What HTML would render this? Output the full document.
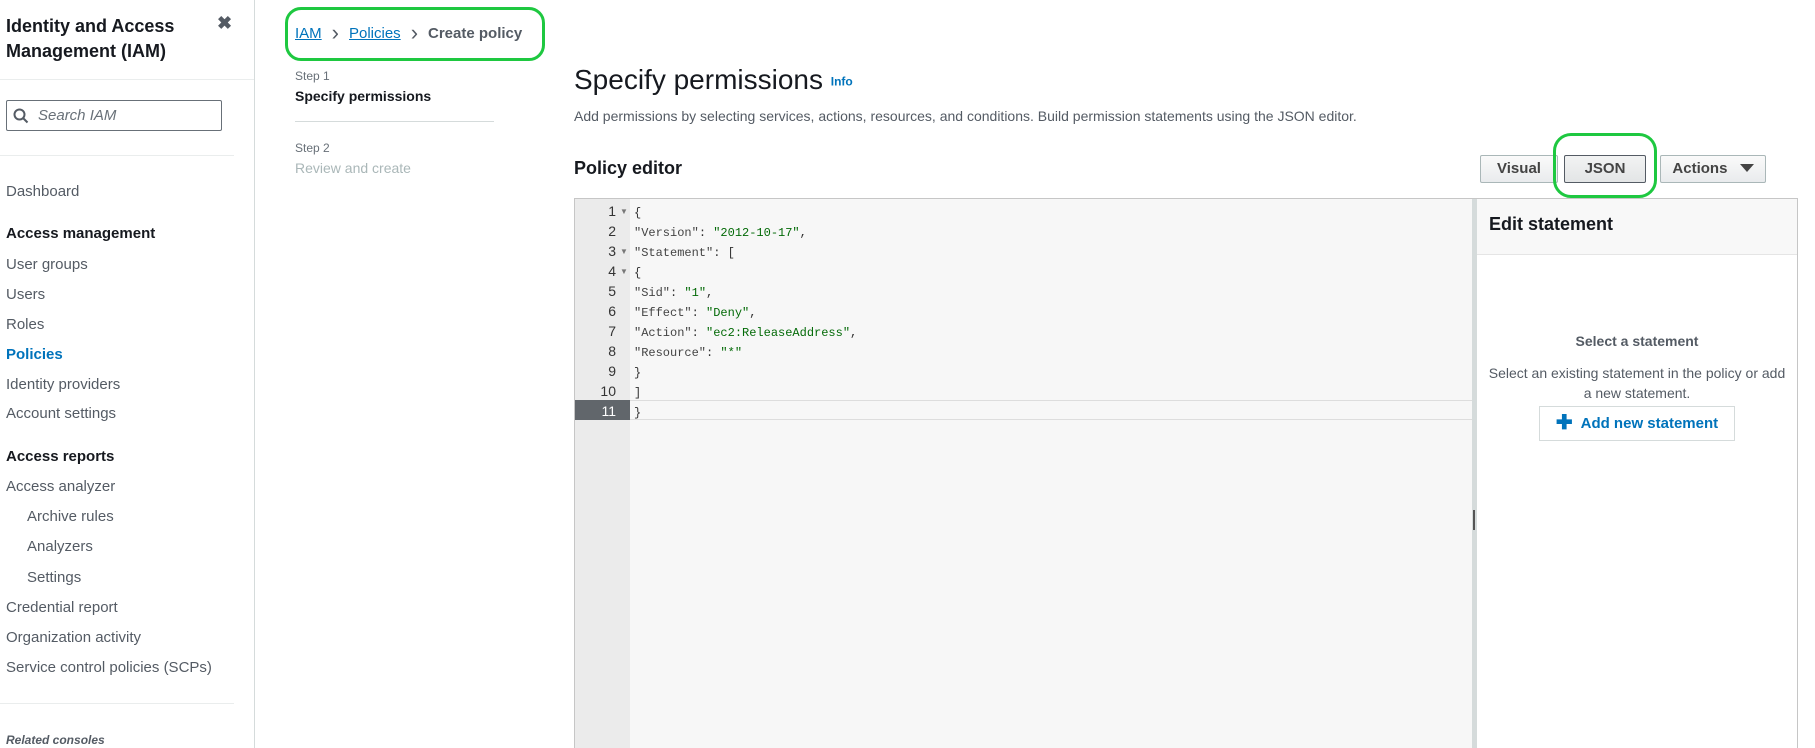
<!DOCTYPE html>
<html style="height:748px;overflow:hidden"><head><meta charset="utf-8"><style>
*{box-sizing:border-box;margin:0;padding:0}
html,body{width:1815px;height:748px;overflow:hidden}
body{background:#fff;font-family:"Liberation Sans",Arial,sans-serif;color:#16191f;position:relative}
.a{position:absolute;white-space:nowrap}
.nav{font-size:15px;color:#545b64;left:6px}
.navb{font-size:15px;color:#16191f;font-weight:bold;left:6px}
.sub{left:27px}
.code{font-family:"Liberation Mono",monospace;font-size:12px;color:#333}
.ln{font-family:"Liberation Sans",sans-serif;font-size:14px;color:#333;width:42px;text-align:right;left:574px}
.s{color:#444}.v{color:#036a07}
.btn{position:absolute;height:28px;border:1px solid #aab7b8;background:linear-gradient(#fafafa,#e9ebed);font-size:15px;font-weight:bold;color:#444;text-align:center;line-height:26px;border-radius:2px}
</style></head><body>
<div class="a" style="left:6px;top:14px;font-size:18px;font-weight:bold;line-height:25px;color:#16191f">Identity and Access<br>Management (IAM)</div>
<div class="a" style="left:217px;top:13px;font-size:18px;font-weight:bold;color:#545b64">✖</div>
<div class="a" style="left:0;top:79px;width:255px;height:1px;background:#eaeded"></div>
<div class="a" style="left:6px;top:100px;width:216px;height:31px;border:1px solid #687078;border-radius:2px"></div>
<svg class="a" style="left:13px;top:108px" width="16" height="16" viewBox="0 0 16 16"><circle cx="6.5" cy="6.5" r="5" fill="none" stroke="#545b64" stroke-width="2"/><line x1="10" y1="10" x2="14.5" y2="14.5" stroke="#545b64" stroke-width="2"/></svg>
<div class="a" style="left:38px;top:107px;font-size:15px;font-style:italic;color:#687078">Search IAM</div>
<div class="a" style="left:0;top:155px;width:234px;height:1px;background:#eaeded"></div>
<div class="a nav" style="top:183px">Dashboard</div>
<div class="a navb" style="top:225px">Access management</div>
<div class="a nav" style="top:256px">User groups</div>
<div class="a nav" style="top:286px">Users</div>
<div class="a nav" style="top:316px">Roles</div>
<div class="a nav" style="top:346px;color:#0073bb;font-weight:bold">Policies</div>
<div class="a nav" style="top:376px">Identity providers</div>
<div class="a nav" style="top:405px">Account settings</div>
<div class="a navb" style="top:448px">Access reports</div>
<div class="a nav" style="top:478px">Access analyzer</div>
<div class="a nav sub" style="top:508px">Archive rules</div>
<div class="a nav sub" style="top:538px">Analyzers</div>
<div class="a nav sub" style="top:569px">Settings</div>
<div class="a nav" style="top:599px">Credential report</div>
<div class="a nav" style="top:629px">Organization activity</div>
<div class="a nav" style="top:659px">Service control policies (SCPs)</div>
<div class="a" style="left:0;top:703px;width:234px;height:1px;background:#eaeded"></div>
<div class="a" style="left:6px;top:733px;font-size:12px;font-style:italic;font-weight:bold;color:#545b64">Related consoles</div>
<div class="a" style="left:254px;top:0;width:1px;height:748px;background:#d5dbdb"></div>
<div class="a" style="left:295px;top:20px;font-size:15px;color:#545b64"><span style="color:#0073bb;text-decoration:underline">IAM</span><span style="margin:0 10px;font-size:22px;vertical-align:-2px">&#x203A;</span><span style="color:#0073bb;text-decoration:underline">Policies</span><span style="margin:0 10px;font-size:22px;vertical-align:-2px">&#x203A;</span><b>Create policy</b></div>
<div class="a" style="left:285px;top:7px;width:260px;height:54px;border:3px solid #1ec840;border-radius:16px"></div>
<div class="a" style="left:295px;top:69px;font-size:12px;color:#687078">Step 1</div>
<div class="a" style="left:295px;top:88px;font-size:14px;font-weight:bold;color:#16191f">Specify permissions</div>
<div class="a" style="left:295px;top:121px;width:199px;height:1px;background:#d5dbdb"></div>
<div class="a" style="left:295px;top:141px;font-size:12px;color:#687078">Step 2</div>
<div class="a" style="left:295px;top:160px;font-size:14px;color:#aab7b8">Review and create</div>
<div class="a" style="left:574px;top:64px;font-size:28px;color:#16191f">Specify permissions <span style="font-size:12px;font-weight:bold;color:#0073bb;vertical-align:middle">Info</span></div>
<div class="a" style="left:574px;top:108px;font-size:14px;color:#545b64">Add permissions by selecting services, actions, resources, and conditions. Build permission statements using the JSON editor.</div>
<div class="a" style="left:574px;top:158px;font-size:18px;font-weight:bold;color:#16191f">Policy editor</div>
<div class="btn" style="left:1480px;top:155px;width:78px">Visual</div>
<div class="btn" style="left:1564px;top:155px;width:82px;background:linear-gradient(#f2f3f3,#e3e5e6);border-color:#545b64">JSON</div>
<div class="btn" style="left:1660px;top:155px;width:106px">Actions <span style="display:inline-block;width:0;height:0;border-left:7px solid transparent;border-right:7px solid transparent;border-top:8px solid #444;margin-left:8px;vertical-align:1px"></span></div>
<div class="a" style="left:1553px;top:133px;width:104px;height:65px;border:3px solid #1ec840;border-radius:18px"></div>
<div class="a" style="left:574px;top:198px;width:1224px;height:550px;border:1px solid #c6c6c6;border-bottom:none;background:#f7f7f7"></div>
<div class="a" style="left:575px;top:199px;width:55px;height:549px;background:#ebebeb"></div>
<div class="a" style="left:630px;top:400px;width:842px;height:20px;border-top:1px solid #ddd;border-bottom:1px solid #ddd"></div>
<div class="a" style="left:575px;top:400px;width:55px;height:20px;background:#61666b"></div>
<div class="a ln" style="top:203px">1</div><div class="a ln" style="top:223px">2</div><div class="a ln" style="top:243px">3</div><div class="a ln" style="top:263px">4</div><div class="a ln" style="top:283px">5</div><div class="a ln" style="top:303px">6</div><div class="a ln" style="top:323px">7</div><div class="a ln" style="top:343px">8</div><div class="a ln" style="top:363px">9</div><div class="a ln" style="top:383px">10</div><div class="a ln" style="top:403px;color:#fff">11</div>
<div class="a" style="left:620px;top:207px;font-size:8px;color:#777">▼</div><div class="a" style="left:620px;top:247px;font-size:8px;color:#777">▼</div><div class="a" style="left:620px;top:267px;font-size:8px;color:#777">▼</div>
<div class="a code" style="left:634px;top:203px;line-height:20px">{<br><span class="s">"Version"</span>: <span class="v">"2012-10-17"</span>,<br><span class="s">"Statement"</span>: [<br>{<br><span class="s">"Sid"</span>: <span class="v">"1"</span>,<br><span class="s">"Effect"</span>: <span class="v">"Deny"</span>,<br><span class="s">"Action"</span>: <span class="v">"ec2:ReleaseAddress"</span>,<br><span class="s">"Resource"</span>: <span class="v">"*"</span><br>}<br>]<br>}</div>
<div class="a" style="left:1472px;top:199px;width:5px;height:549px;background:#d5dbdb"></div>
<div class="a" style="left:1473px;top:510px;width:2px;height:20px;background:#555"></div>
<div class="a" style="left:1477px;top:199px;width:320px;height:56px;background:#f8f8f8;border-bottom:1px solid #e5e5e5"></div>
<div class="a" style="left:1477px;top:255px;width:320px;height:493px;background:#fff"></div>
<div class="a" style="left:1489px;top:214px;font-size:18px;font-weight:bold;color:#16191f">Edit statement</div>
<div class="a" style="left:1477px;top:333px;width:320px;text-align:center;font-size:14px;font-weight:bold;color:#545b64">Select a statement</div>
<div class="a" style="left:1477px;top:363px;width:320px;text-align:center;font-size:14px;line-height:20px;color:#545b64">Select an existing statement in the policy or add<br>a new statement.</div>
<div class="a" style="left:1539px;top:406px;width:196px;height:35px;border:1px solid #d5dbdb;text-align:center;line-height:33px;font-size:15px;font-weight:bold;color:#0073bb"><span style="font-size:20px;vertical-align:-1px;margin-right:8px">✚</span>Add new statement</div>
</body></html>
